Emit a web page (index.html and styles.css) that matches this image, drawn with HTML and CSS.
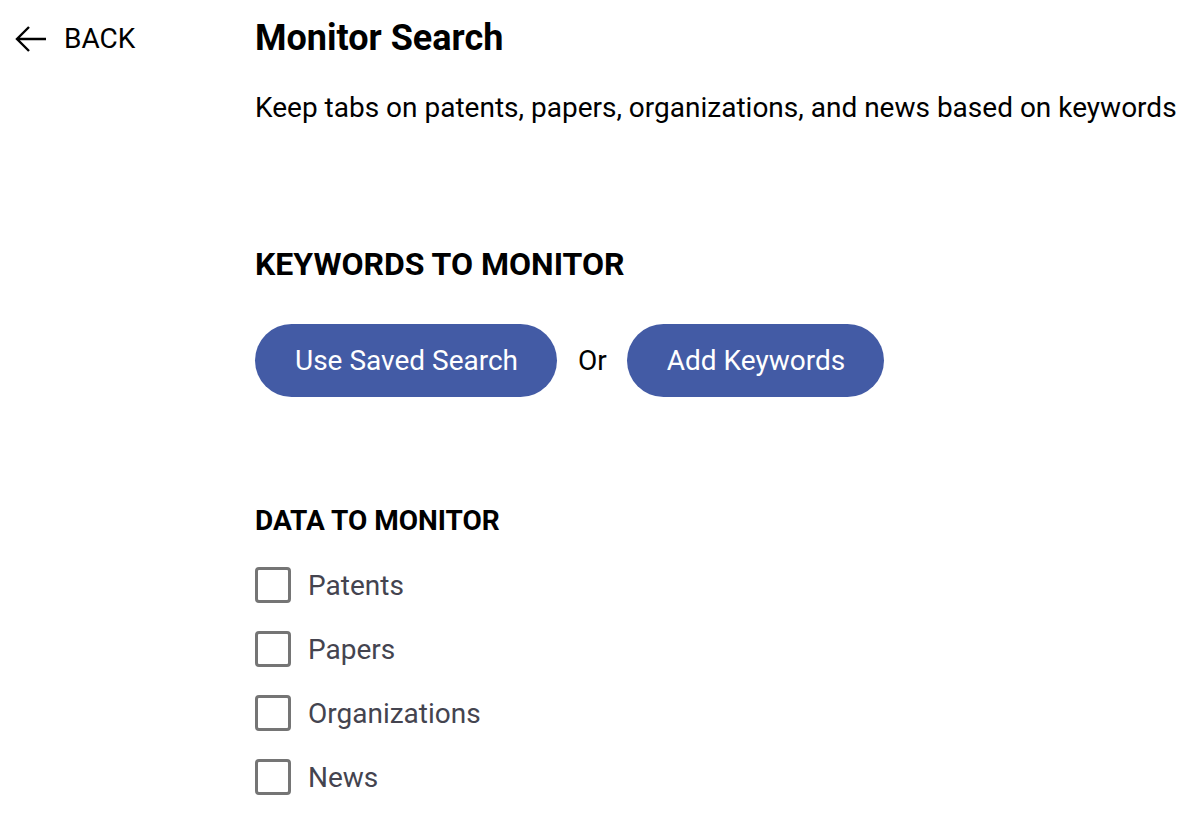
FILE: index.html
```html
<!DOCTYPE html>
<html>
<head>
<meta charset="utf-8">
<link rel="stylesheet" href="styles.css">
</head>
<body>
<div class="page">
  <aside class="side">
    <a class="back" href="#">
      <svg class="back-icon" width="34" height="28" viewBox="0 0 34 28"><path d="M32 14H3M15 2L3 14l12 12" fill="none" stroke="#000" stroke-width="2.4"/></svg>
      <span>BACK</span>
    </a>
  </aside>
  <main class="main">
    <h1 class="title">Monitor Search</h1>
    <p class="subtitle">Keep tabs on patents, papers, organizations, and news based on keywords</p>
    <h2 class="section-h kw">KEYWORDS TO MONITOR</h2>
    <div class="btn-row">
      <button class="pill">Use Saved Search</button>
      <span class="or">Or</span>
      <button class="pill">Add Keywords</button>
    </div>
    <h2 class="section-h data">DATA TO MONITOR</h2>
    <ul class="checks">
      <li class="check"><span class="box"></span><span class="label">Patents</span></li>
      <li class="check"><span class="box"></span><span class="label">Papers</span></li>
      <li class="check"><span class="box"></span><span class="label">Organizations</span></li>
      <li class="check"><span class="box"></span><span class="label">News</span></li>
    </ul>
  </main>
</div>
</body>
</html>
```
FILE: styles.css
```css
* { box-sizing: border-box; }
html, body { margin: 0; padding: 0; background: #fff; }
body { font-family: Roboto, "Noto Sans", sans-serif; color: #000; }
.page { display: flex; }
.side { width: 255px; flex: none; padding: 24px 0 0 14px; }
.back { display: flex; align-items: center; gap: 16px; color: #000; text-decoration: none; font-size: 28px; line-height: 30px; }
.back-icon { display: block; }
.main { padding-top: 18px; }
.title { margin: 0; font-size: 36px; font-weight: 700; line-height: 40px; }
.subtitle { margin: 33px 0 0; font-size: 28px; line-height: 34px; white-space: nowrap; }
.section-h { margin: 0; font-weight: 700; }
.kw { margin-top: 120px; font-size: 32px; line-height: 38px; }
.btn-row { display: flex; align-items: center; margin-top: 41px; }
.pill { height: 73px; border: none; border-radius: 37px; background: #435ba5; color: #fff; font-family: Roboto, sans-serif; font-size: 28px; padding: 0 39px 0 40px; cursor: pointer; }
.or { font-size: 28px; margin: 0 20px 0 21px; }
.data { margin-top: 107px; font-size: 28px; line-height: 34px; }
.checks { list-style: none; margin: 15px 0 0; padding: 0; }
.check { display: flex; align-items: center; height: 64px; gap: 17px; }
.box { width: 36px; height: 36px; border: 3px solid #757575; border-radius: 4px; }
.label { font-size: 28px; color: #44444f; }
```
